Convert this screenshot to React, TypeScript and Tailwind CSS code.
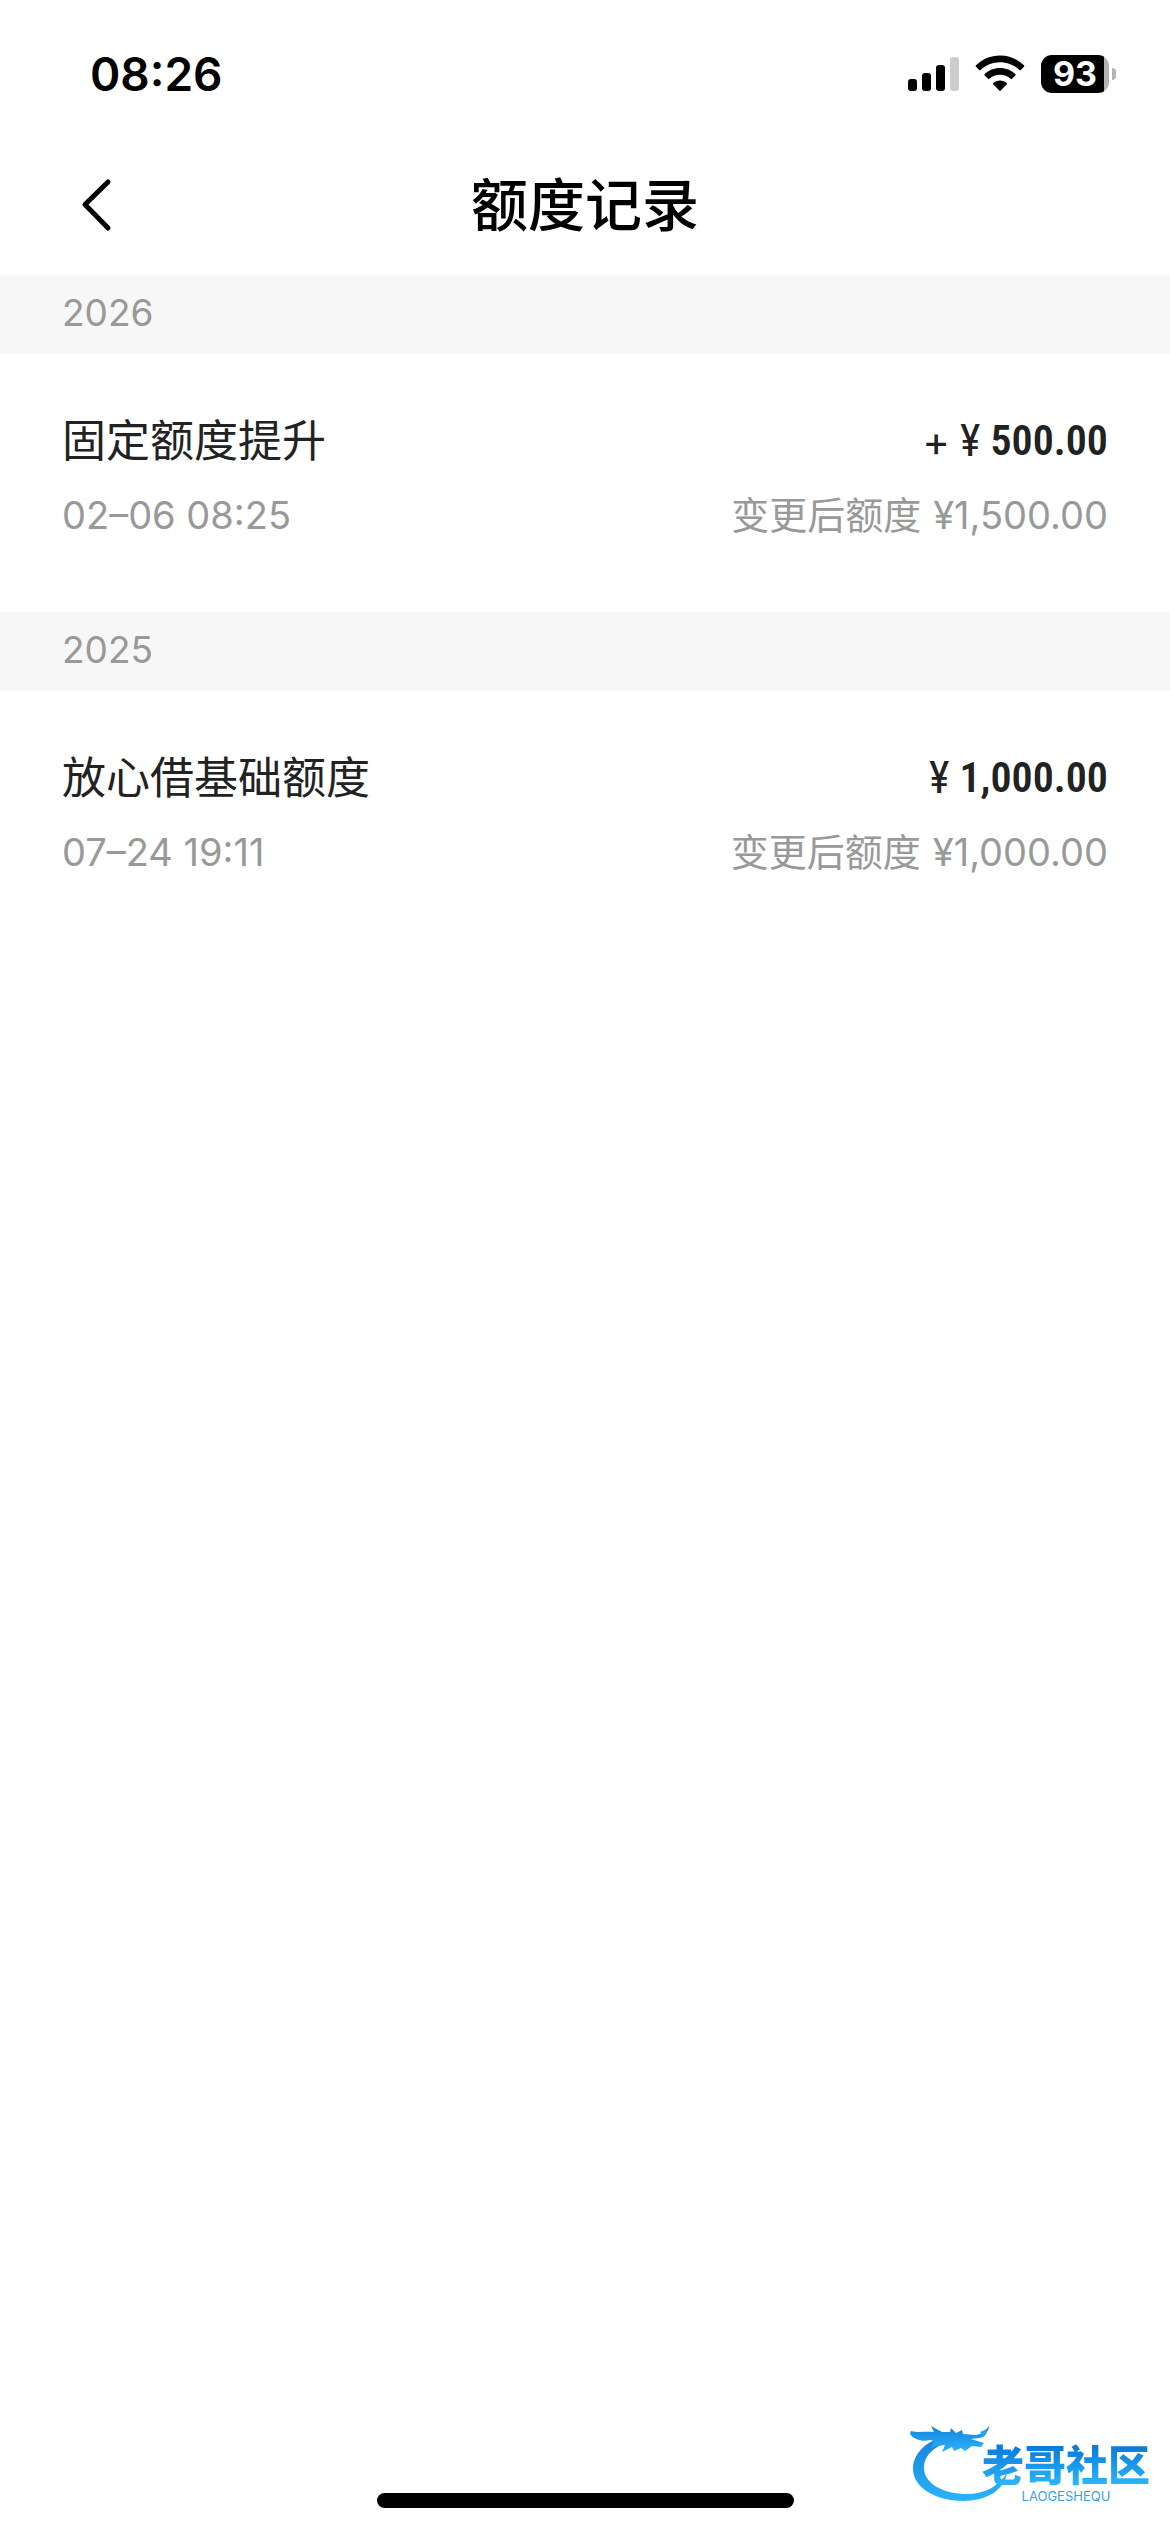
import React from "react";

type QuotaRecord = {
  title: string;
  time: string;
  sign?: string;
  amount: string;
  after: string;
};

type YearGroup = {
  year: string;
  records: QuotaRecord[];
};

const groups: YearGroup[] = [
  {
    year: "2026",
    records: [
      {
        title: "固定额度提升",
        time: "02–06 08:25",
        sign: "+",
        amount: "500.00",
        after: "¥1,500.00",
      },
    ],
  },
  {
    year: "2025",
    records: [
      {
        title: "放心借基础额度",
        time: "07–24 19:11",
        amount: "1,000.00",
        after: "¥1,000.00",
      },
    ],
  },
];

const StatusBar = () => (
  <div className="flex h-[141px] items-start justify-between pl-[90px] pr-[54px] pt-[46px]">
    <span className="text-[46px] font-semibold leading-[56px]">08:26</span>
    <div className="flex h-14 items-center gap-4">
      {/* Signal */}
      <svg width="51" height="38" viewBox="0 0 51 38" aria-hidden="true">
        <rect x="0" y="24" width="9" height="12" rx="3" />
        <rect x="14" y="18" width="9" height="18" rx="3" />
        <rect x="28" y="10" width="9" height="26" rx="3" />
        <rect x="42" y="2" width="9" height="34" rx="3" fill="#cccccc" />
      </svg>
      {/* Wifi */}
      <svg width="50" height="38" viewBox="0 0 50 38" aria-hidden="true">
        <path d="M25 0.5C15.700 .5 7.200 4.200 1 10.300a1 1 0 0 0 0 1.400l3.200 3.300a1 1 0 0 0 1.400 0C10.600 10.200 17.400 7.300 25 7.300s14.400 2.900 19.400 7.700a1 1 0 0 0 1.400 0l3.200-3.300a1 1 0 0 0 0-1.400C42.800 4.200 34.300.5 25 .5Z" />
        <path d="M25 13c-5.900 0-11.300 2.300-15.300 6a1 1 0 0 0 0 1.500l3.300 3.300a1 1 0 0 0 1.400 0c2.800-2.500 6.500-4 10.600-4s7.800 1.500 10.600 4a1 1 0 0 0 1.400 0l3.300-3.300a1 1 0 0 0 0-1.500c-4-3.700-9.400-6-15.300-6Z" />
        <path d="M25 25.500c-2.500 0-4.800.9-6.600 2.400a1 1 0 0 0 0 1.500l5.800 6.100a1.100 1.100 0 0 0 1.600 0l5.800-6.100a1 1 0 0 0 0-1.500c-1.800-1.500-4.100-2.400-6.600-2.400Z" />
      </svg>
      {/* Battery */}
      <div className="flex items-center gap-[3px]">
        <div className="flex h-[38px] w-[68px] justify-center rounded-[11px] bg-linear-to-r from-black from-93% to-[#b3b3b3] to-93%">
          <span className="text-[34px] font-bold leading-[38px] text-white">
            93
          </span>
        </div>
        <div className="h-[12px] w-[4px] rounded-r-full bg-[#b3b3b3]" />
      </div>
    </div>
  </div>
);

const Header = () => (
  <header className="grid h-[134px] grid-cols-[1fr_auto_1fr] items-start px-[72px]">
    <button
      type="button"
      aria-label="返回"
      className="flex h-32 w-16 items-center pl-2"
    >
      <svg width="34" height="54" viewBox="0 0 34 54" fill="none">
        <path
          d="M28 4 5 26.500 28 50"
          stroke="#000000"
          strokeWidth="5"
          strokeLinecap="round"
          strokeLinejoin="round"
        />
      </svg>
    </button>
    <h1 className="text-[57px] font-medium leading-[130px]">额度记录</h1>
  </header>
);

const RecordRow = ({ record }: { record: QuotaRecord }) => (
  <li className="flex flex-col gap-[22px] px-[62px] pb-[73px] pt-[59px]">
    <div className="flex items-center justify-between leading-[56px] text-[#222222]">
      <h3 className="text-[44px]">{record.title}</h3>
      <p className="flex items-center gap-[10px] font-['Roboto_Condensed',Roboto,sans-serif] text-[42px] font-semibold">
        {record.sign && (
          <span className="font-[Inter,sans-serif] font-normal">
            {record.sign}
          </span>
        )}
        <span className="text-[44px] font-normal">¥</span>
        <span>{record.amount}</span>
      </p>
    </div>
    <div className="flex items-center justify-between text-[38px] leading-[48px] text-[#999999]">
      <time>{record.time}</time>
      <p className="flex gap-3">
        <span>变更后额度</span>
        <span>{record.after}</span>
      </p>
    </div>
  </li>
);

const Watermark = () => (
  <div className="absolute bottom-7 right-5 flex items-start">
    <svg width="102" height="80" viewBox="0 0 102 80" aria-hidden="true">
      <defs>
        <linearGradient id="dragon" x1="0" y1="0" x2="0" y2="1">
          <stop offset="0" stopColor="#1583dc" />
          <stop offset="1" stopColor="#2ab4fb" />
        </linearGradient>
      </defs>
      <g fill="url(#dragon)">
        <path d="M30 14C14 19 3 31 3 45c0 18 22 32 50 32 24 0 41-11 44-28-8 13-22 21-40 21C34 70 14 60 14 44c0-13 10-21 26-27Z" />
        <path d="M1 7c8 2 15 0 23 1l-3-6 11 6 8 0 1-4 5 5 6-3 1 4 13 1 11-3c-1 3-3 5-7 6l-9 1 13 4-3 4-9-1-7 5-4-3-7 3-2-4-10 5 3-7-8 1-6 2 3-7-4-1c-7 2-16 0-20-6Z" />
        <path d="M70 8c4-1 7-3 9-6 0 5-3 8-7 9Z" />
      </g>
    </svg>
    <div className="-ml-[30px] mt-5 flex flex-col items-center">
      <span className="bg-linear-to-b from-[#0a7ddb] from-10% to-[#2ab4fb] to-90% bg-clip-text text-[42px] font-black leading-[44px] text-transparent">
        老哥社区
      </span>
      <span className="text-[13px] leading-4 text-[#3f9fe6]">LAOGESHEQU</span>
    </div>
  </div>
);

const App = () => {
  return (
    <div className="relative flex min-h-screen flex-col bg-white font-[Inter,'Noto_Sans_CJK_SC',sans-serif] text-black">
      <StatusBar />
      <Header />

      <main className="flex-1">
        {groups.map((group) => (
          <section key={group.year}>
            <h2 className="bg-[#f7f7f7] px-[62px] pb-[3px] text-[37px] font-normal leading-[76px] text-[#999999]">
              {group.year}
            </h2>
            <ul>
              {group.records.map((record) => (
                <RecordRow key={record.time} record={record} />
              ))}
            </ul>
          </section>
        ))}
      </main>

      {/* Home indicator */}
      <div className="mx-auto mb-6 h-[15px] w-[417px] rounded-full bg-black" />
      <Watermark />
    </div>
  );
};

export default App;
